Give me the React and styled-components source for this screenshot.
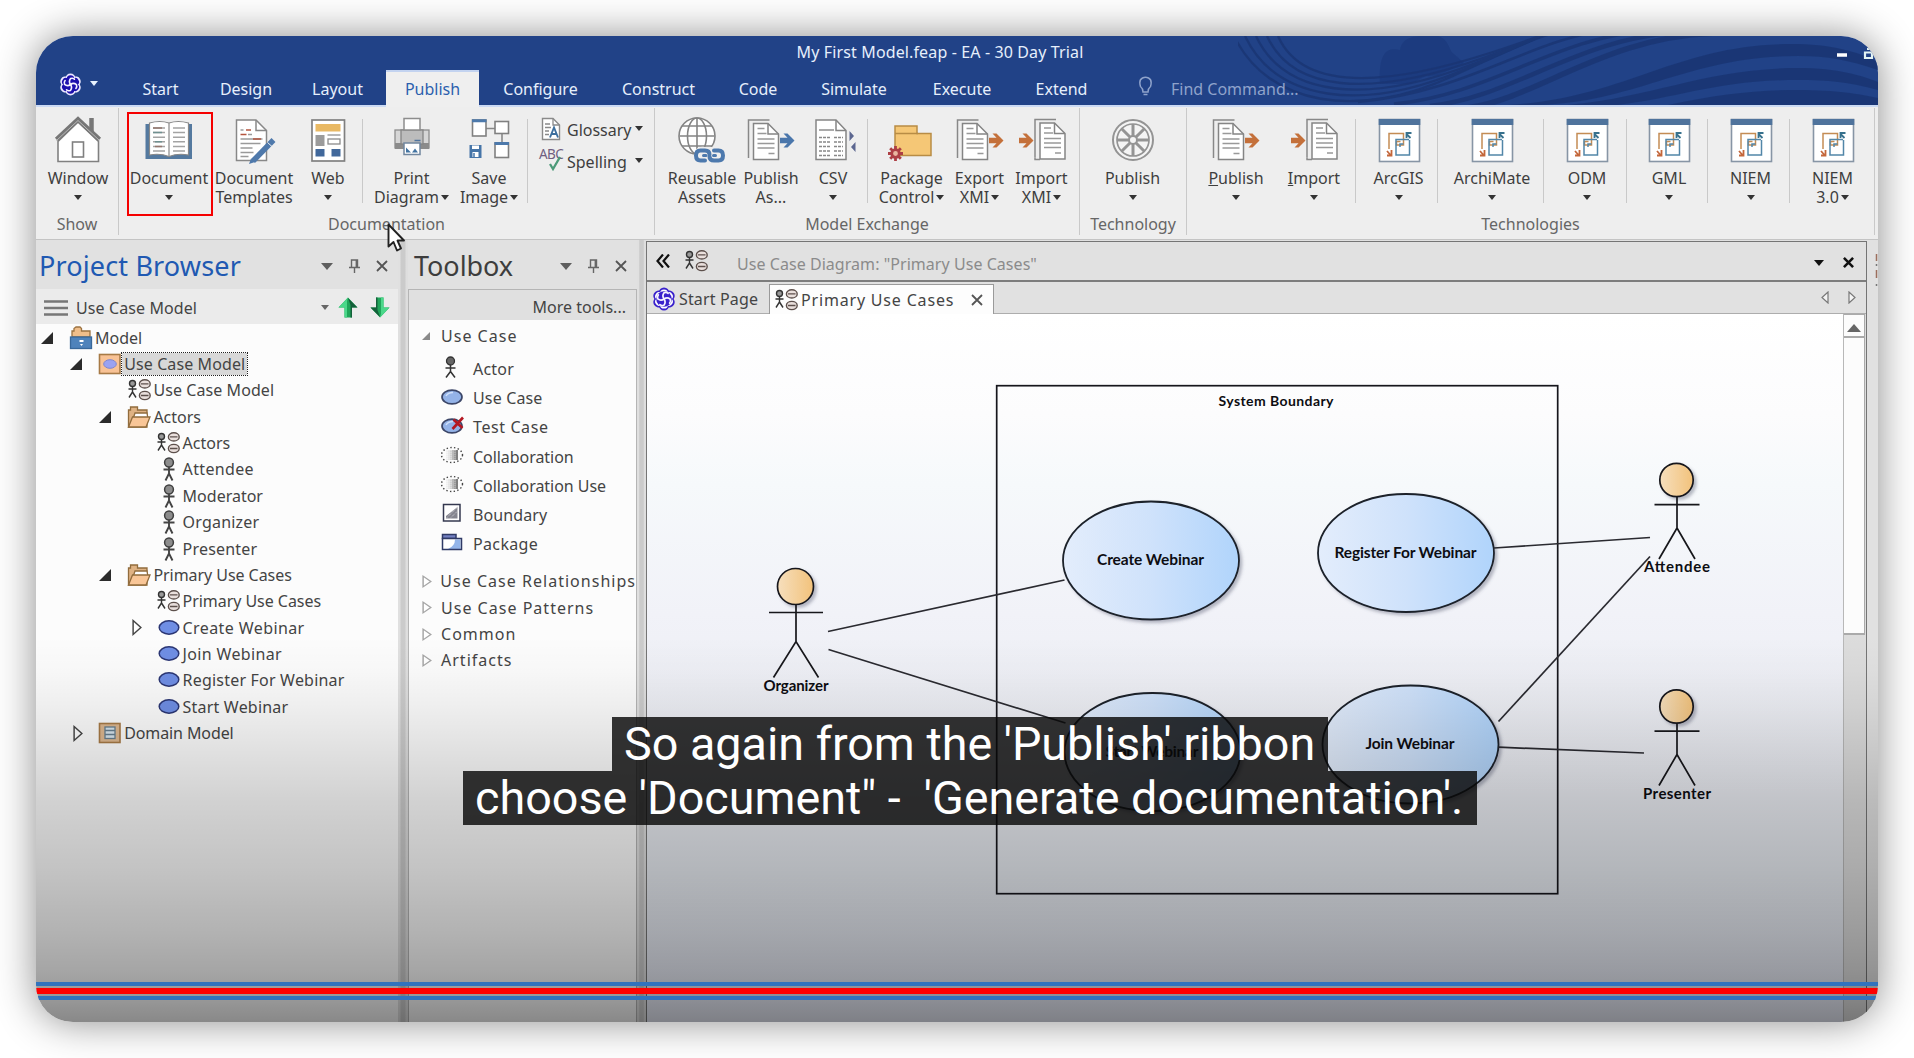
import React from 'react';
import styled, { createGlobalStyle, css } from 'styled-components';

const GlobalStyle = createGlobalStyle`
  * { box-sizing: border-box; }
  body { margin: 0; background: #fff; overflow: hidden; }
  svg { display: block; flex: none; }
`;

const ui = `"Noto Sans", "Open Sans", sans-serif`;

/* ---------- shell ---------- */

const Page = styled.main`
  width: 1914px;
  height: 1058px;
  padding: 36px;
  background: #fff;
  font-family: ${ui};
  font-size: 16px;
  color: #444;
`;

const Frame = styled.div`
  position: relative;
  display: flex;
  flex-direction: column;
  width: 1842px;
  height: 986px;
  border-radius: 37px;
  overflow: hidden;
  background: #e1e1e1;
`;

const Shadow = styled.div`
  border-radius: 37px;
  box-shadow: 0 0 40px rgba(0, 0, 0, 0.46);
`;

const Header = styled.header`
  position: relative;
  flex: none;
  height: 71px;
  background: #214287;
  border-bottom: 2px solid #cbdaf4;
  color: #e6effc;
`;

const Waves = styled.svg`
  position: absolute;
  top: 0;
  right: 0;
`;

const TitleRow = styled.div`
  position: relative;
  display: flex;
  height: 34px;
`;

const Title = styled.div`
  flex: 1;
  padding-left: 7px;
  text-align: center;
  line-height: 33px;
  letter-spacing: 0.13px;
`;

const Controls = styled.div`
  display: flex;
  gap: 16px;
  width: 41px;
  padding-top: 12px;
`;

const TabRow = styled.nav`
  position: relative;
  display: flex;
  height: 37px;
`;

const AppMenu = styled.div`
  display: flex;
  gap: 8px;
  width: 82px;
  padding: 3px 0 0 23px;
  color: #fff;
`;

const MenuTab = styled.div`
  width: ${(p) => p.$w}px;
  padding-top: 1px;
  line-height: 36px;
  text-align: center;
  ${(p) => p.$active && css`
    background: #efefef;
    box-shadow: inset 0 2px 0 #c3d3f0;
    color: #2c5fae;
  `}
`;

const Find = styled.div`
  display: flex;
  gap: 18px;
  padding-left: 32px;
  line-height: 38px;
  color: #8fa3cb;
`;

/* ---------- ribbon ---------- */

const Ribbon = styled.section`
  display: flex;
  flex: none;
  height: 133px;
  padding-top: 1px;
  background: #eeeeee;
  border-bottom: 1px solid #c4c4c4;
`;

const Group = styled.div`
  display: flex;
  flex-direction: column;
  width: ${(p) => p.$w}px;
  height: 127px;
  border-right: 1px solid #c9c9c9;
`;

const Items = styled.div`
  display: flex;
  height: 103px;
  padding-left: ${(p) => p.$pad || 0}px;
`;

const GroupLabel = styled.div`
  height: 24px;
  line-height: 26px;
  text-align: center;
  color: #666;
`;

const Sep = styled.i`
  flex: none;
  width: 1px;
  height: 84px;
  margin: 11px ${(p) => p.$r || 0}px 0 ${(p) => p.$l || 0}px;
  background: #c9c9c9;
`;

const RibbonButton = styled.div`
  display: flex;
  flex-direction: column;
  align-items: center;
  flex: none;
  width: ${(p) => p.$w}px;
  height: 103px;
  padding-top: 7px;
  color: #3e3e3e;
`;

const ButtonText = styled.span`
  display: flex;
  align-items: center;
  gap: ${(p) => (p.$first ? 0 : 2)}px;
  height: 19px;
  margin-top: ${(p) => (p.$first ? 4 : 0)}px;
  line-height: 19px;
  white-space: pre;
`;

const Caret = styled.i`
  width: 0;
  height: 0;
  border: ${(p) => p.$s || 4}px solid transparent;
  border-top: ${(p) => (p.$s || 4) + 1}px solid ${(p) => p.$c || '#333'};
  border-bottom: 0;
`;

const MenuCaret = styled(Caret)`
  margin-top: 8px;
`;

const Marker = styled.div`
  position: absolute;
  left: 91px;
  top: 76px;
  width: 86px;
  height: 104px;
  border: 2px solid #f50000;
`;

const Stack = styled.div`
  display: flex;
  flex-direction: column;
  gap: 7px;
  padding-top: 8px;
`;

const StackRow = styled.div`
  display: flex;
  align-items: center;
  height: 25px;
  width: 107px;
  color: #3e3e3e;
`;

const StackText = styled.span`
  width: 68px;
  margin-left: 4px;
  padding-top: 2px;
`;

/* ---------- body ---------- */

const Body = styled.div`
  display: flex;
  flex: 1;
  min-height: 0;
`;

const Splitter = styled.div`
  flex: none;
  width: ${(p) => p.$w}px;
  background: linear-gradient(90deg, #e0e0e0 0 20%, #cbcbcb 30% 70%, #dedede 80%);
`;

const Browser = styled.section`
  display: flex;
  flex-direction: column;
  width: 362px;
`;

const PanelHead = styled.div`
  display: flex;
  align-items: center;
  flex: none;
  height: 49px;
  padding: 3px ${(p) => p.$r}px 0 ${(p) => p.$l}px;
  background: #e1e1e1;
`;

const PanelTitle = styled.h2`
  flex: 1;
  margin: 0;
  font-size: ${(p) => p.$size}px;
  font-weight: 400;
  letter-spacing: ${(p) => p.$ls || 0}px;
  line-height: 40px;
  color: ${(p) => p.$c};
`;

const HeadIconsRow = styled.span`
  display: flex;
  align-items: center;
  gap: 16px;
`;

const ModelPicker = styled.div`
  display: flex;
  align-items: center;
  flex: none;
  height: 35px;
  padding: 2px 8px 0 8px;
  background: #ebebeb;
`;

const PickerText = styled.span`
  flex: 1;
  padding: 1px 0 0 8px;
  letter-spacing: 0.1px;
`;

const PickerArrows = styled.span`
  display: flex;
  gap: 12px;
  margin-left: 9px;
`;

const Tree = styled.div`
  flex: 1;
  padding-top: 0.5px;
  background: #fcfcfc;
`;

const TreeRow = styled.div`
  display: flex;
  align-items: center;
  height: 26.37px;
  padding-left: ${(p) => 4 + p.$level * 29.2}px;
  white-space: pre;
`;

const TreeArrow = styled.span`
  display: flex;
  width: 29px;
  padding-left: ${(p) => (p.$closed ? 4 : 1)}px;
`;

const TreeIcon = styled.span`
  display: flex;
  justify-content: center;
  width: 24px;
`;

const TreeLabel = styled.span`
  padding: 0 2px;
  line-height: 22px;
  letter-spacing: ${(p) => p.$ls}px;
  ${(p) => p.$selected && css`
    background: #d8d8d8;
    outline: 1px dotted #222;
  `}
`;

const Toolbox = styled.section`
  display: flex;
  flex-direction: column;
  width: 229px;
`;

const ToolBody = styled.div`
  flex: 1;
  width: 229px;
  border: 1px solid #b5b5b5;
  border-width: 1px 1px 0 1px;
  background: #fcfcfc;
  overflow: hidden;
`;

const MoreTools = styled.div`
  height: 30px;
  padding-right: 10px;
  background: #e0e0e0;
  text-align: right;
  line-height: 35px;
`;

const Category = styled.div`
  display: flex;
  align-items: center;
  height: ${(p) => p.$h || 26.4}px;
  padding-left: 13px;
  letter-spacing: 1.02px;
  white-space: nowrap;
`;

const CategoryArrow = styled.span`
  display: flex;
  width: 19px;
`;

const ToolItem = styled.div`
  display: flex;
  align-items: center;
  height: 29.3px;
  padding-left: 32px;
  letter-spacing: ${(p) => p.$ls || 0}px;
`;

const ToolIcon = styled.span`
  display: flex;
  justify-content: center;
  width: 22px;
  margin: -4px 10px 0 0;
`;

const ToolList = styled.div`
  padding: 3px 0 9px;
`;

const Workspace = styled.section`
  display: flex;
  flex-direction: column;
  width: 1221px;
  margin-top: 1px;
  border: 1.5px solid #757575;
  border-bottom: 0;
`;

const DocHead = styled.div`
  display: flex;
  align-items: center;
  flex: none;
  height: 40px;
  padding: 0 12px 0 9px;
  border-bottom: 2px solid #7d7d7d;
  background: #e1e1e1;
`;

const DocIcon = styled.span`
  margin-left: 15px;
`;

const DocTitle = styled.span`
  flex: 1;
  padding: 6px 0 0 29px;
  letter-spacing: 0.05px;
  color: #8b8b8b;
`;

const HeadTools = styled.span`
  display: flex;
  align-items: center;
  gap: 19px;
  padding-top: 3px;
`;

const DocTabs = styled.div`
  display: flex;
  align-items: flex-end;
  flex: none;
  height: 32px;
  background: #e1e1e1;
  box-shadow: inset 0 -1px 0 #adadad;
`;

const DocTab = styled.div`
  display: flex;
  align-items: center;
  gap: 3px;
  width: ${(p) => p.$w}px;
  height: 30px;
  padding-left: 5px;
  white-space: nowrap;
  letter-spacing: 0.15px;
  ${(p) => p.$active && css`
    border: 1px solid #9a9a9a;
    border-bottom: 0;
    padding-top: 1px;
    background: #fdfdfd;
    letter-spacing: 0.82px;
  `}
`;

const TabClose = styled.span`
  margin-left: 14px;
`;

const TabNav = styled.div`
  display: flex;
  gap: 19px;
  margin-left: auto;
  padding: 0 10px 10px 0;
`;

const CanvasRow = styled.div`
  display: flex;
  flex: 1;
  min-height: 0;
`;

const Canvas = styled.div`
  flex: 1;
  overflow: hidden;
  background: linear-gradient(#fff 0, #fcfcfd 100px, #f6f9fb 170px, #f1f2f8 300px, #e9ebf1 480px, #e7ebf1 560px, #e9ecf8 708px);
`;

const Scrollbar = styled.div`
  display: flex;
  flex-direction: column;
  width: 23px;
  padding-right: 1px;
  background: #dcdcdc;
  border-left: 1px solid #b8b8b8;
`;

const ScrollButton = styled.div`
  display: flex;
  justify-content: center;
  height: 24px;
  padding-top: 9px;
  background: #fcfcfc;
  border: 1px solid #aaa;
  border-width: 1px 1px 2px 0;
`;

const ScrollThumb = styled.div`
  height: 297px;
  background: #fcfcfc;
  border: 1px solid #aaa;
  border-width: 0 1px 2px 0;
`;

const DockEdge = styled.div`
  flex: 1;
  padding: 14px 0 0 8px;
`;

/* ---------- player overlay ---------- */

const Shade = styled.div`
  position: absolute;
  inset: 600px 0 0 0;
  background: linear-gradient(
    rgba(0, 0, 0, 0) 0,
    rgba(0, 0, 0, 0.018) 35px,
    rgba(0, 0, 0, 0.055) 70px,
    rgba(0, 0, 0, 0.12) 125px,
    rgba(0, 0, 0, 0.17) 164px,
    rgba(0, 0, 0, 0.225) 231px,
    rgba(0, 0, 0, 0.295) 297px,
    rgba(0, 0, 0, 0.345) 335px,
    rgba(0, 0, 0, 0.4) 364px,
    rgba(0, 0, 0, 0.46) 386px
  );
`;

const Captions = styled.div`
  position: absolute;
  left: 427px;
  top: 681px;
  width: 1014px;
  display: flex;
  flex-direction: column;
  align-items: center;
  font-family: Roboto, sans-serif;
  font-size: 46.7px;
  color: #fff;
`;

const CaptionLine = styled.div`
  width: ${(p) => p.$w}px;
  height: 54px;
  padding-left: 12px;
  background: rgba(8, 8, 8, 0.82);
  line-height: 55px;
  white-space: pre;
`;

const Progress = styled.div`
  position: absolute;
  left: 0;
  right: 0;
  top: 946px;
  height: 18px;
  padding: 2px 0;
  border: 4px solid #3273bd;
  border-width: 4px 0;
`;

const Played = styled.div`
  height: 6px;
  background: #ff0000;
`;

const Pointer = styled.svg`
  position: absolute;
  left: 351px;
  top: 187px;
`;

/* ---------- ribbon icons (50 x 50 grid) ---------- */

const Ico = ({ children }) => (
  <svg width="50" height="50" viewBox="0 0 50 50" fill="none">{children}</svg>
);

const HouseIcon = () => (
  <Ico>
    <path d="M38.500 3v16" stroke="#777" strokeWidth="4.500" />
    <path d="M5 26.500V46.500H45.500V26.500L25 7Z" fill="#fff" stroke="#808080" strokeWidth="1.600" />
    <path d="M3.500 24.500 25 4.500 46.500 24.500" stroke="#777" strokeWidth="4.600" />
    <path d="M3.500 25.500 25 5.500 46.500 25.500" stroke="#b9b9b9" strokeWidth="1" />
    <rect x="19.500" y="27" width="11" height="15" fill="#fff" stroke="#808080" strokeWidth="1.600" />
  </Ico>
);

const BookIcon = () => (
  <Ico>
    <path d="M1.500 9H48v35H1.500Z" fill="#54799f" />
    <path d="M5.500 8Q16 5 25 8Q34 5 44.500 8V40Q34 38 25 41.500Q16 38 5.500 40Z" fill="#fff" stroke="#888" strokeWidth="1.200" />
    <path d="M25 8v33" stroke="#999" strokeWidth="1.400" />
    <path d="M9 13h12M9 17.600h12M9 22.200h12M9 26.800h12M9 31.400h12M9 36h12M29 13h12M29 17.600h12M29 22.200h12M29 26.800h12M29 31.400h12M29 36h12" stroke="#a3a3a3" strokeWidth="1.500" />
    <path d="M9 13h9M11 31.400h7" stroke="#94776e" strokeWidth="1.500" />
    <path d="M9 17.600h9M11 26.800h7" stroke="#6f9090" strokeWidth="1.500" />
  </Ico>
);

const TemplateIcon = () => (
  <Ico>
    <path d="M7.500 5H27L37.500 15.500V45.500H7.500Z" fill="#fff" stroke="#888" strokeWidth="1.500" />
    <path d="M27 5V15.500H37.500" stroke="#888" strokeWidth="1.500" />
    <path d="M11.500 15h3M19 19.500h4M11.500 24h22M11.500 28.500h20M11.500 33h12M11.500 37.500h13M11.500 41.500h8" stroke="#9a9a9a" strokeWidth="1.400" />
    <path d="M17 15h5M11.500 19.500h6M24 24h8" stroke="#b5553f" strokeWidth="1.600" />
    <path d="M44.500 25 24 46" stroke="#4f79ab" strokeWidth="5.500" />
    <path d="M38.500 27.500l4.500 4" stroke="#eee" strokeWidth="1" />
    <path d="M22 43.500 20 49l6-2Z" fill="#4f79ab" />
  </Ico>
);

const WebIcon = () => (
  <Ico>
    <rect x="9" y="5" width="32.500" height="41" fill="#fff" stroke="#808080" strokeWidth="1.700" />
    <path d="M12.500 9h25v7.500h-25Z" fill="#e9b964" />
    <path d="M12.500 20h9v11h-9Z" fill="#9b9b9b" />
    <path d="M24.500 20h13" stroke="#a0a0a0" strokeWidth="1.500" />
    <rect x="25" y="24" width="12" height="5" stroke="#8b8b8b" strokeWidth="1.300" />
    <path d="M12.500 34h9v7.500h-9ZM28.500 34h9v7.500h-9Z" fill="#41689b" />
  </Ico>
);

const PrinterIcon = () => (
  <Ico>
    <rect x="8" y="15" width="34" height="18" fill="#d6d6d6" stroke="#8d8d8d" strokeWidth="1.300" />
    <path d="M8 28h34v6H8Z" fill="#8b8b8b" />
    <rect x="14" y="15" width="22" height="14" fill="#bcbcbc" stroke="#858585" strokeWidth="1.300" />
    <rect x="17" y="3.500" width="16" height="11.500" fill="#fff" stroke="#8d8d8d" strokeWidth="1.500" />
    <path d="M27.500 25.500h6" stroke="#50759f" strokeWidth="1.500" />
    <rect x="17" y="28" width="16" height="11.500" fill="#fff" stroke="#71879f" strokeWidth="1.500" />
    <path d="M19 37.500v-5l5 5ZM25 37.500l3-4 3 4Z" fill="#4274a2" />
  </Ico>
);

const SaveImageIcon = () => (
  <Ico>
    <path d="M22 13.500h10M38 19v8" stroke="#888" strokeWidth="1.600" />
    <rect x="8.500" y="5" width="13.500" height="16" fill="#fff" stroke="#808080" strokeWidth="1.600" />
    <rect x="31" y="6.500" width="13.500" height="12" fill="#fff" stroke="#808080" strokeWidth="1.600" />
    <rect x="31" y="28" width="13.500" height="14.500" fill="#fff" stroke="#808080" strokeWidth="1.600" />
    <path d="M8 5.800h14.500M30.500 28.500h14.500" stroke="#4d79ab" strokeWidth="3" />
    <path d="M5.500 30h12v13h-12Z" fill="#4675a8" />
    <path d="M8 30.500h7v3.500H8ZM8.500 37h6v5h-6Z" fill="#fff" />
    <path d="M10 38v4" stroke="#4675a8" strokeWidth="1.500" />
  </Ico>
);

const GlobeIcon = () => (
  <Ico>
    <g stroke="#848484" strokeWidth="1.600">
      <circle cx="20" cy="21" r="18" fill="#fff" />
      <ellipse cx="20" cy="21" rx="9.500" ry="18" />
      <path d="M20 3v36M2.500 21h35M5 11h30M5 31h30" />
    </g>
    <path d="M18 46V36Q21 31 28 32H48V47Z" fill="#eee" />
    <g stroke="#4d79ad" strokeWidth="4" strokeLinecap="round">
      <path d="M28 45.500H23.500Q19 45.500 19 40.500T23.500 35.500H28Q32.500 35.500 32.500 39.500" />
      <path d="M37 35.500H41.500Q46 35.500 46 40.500T41.500 45.500H37Q32.500 45.500 32.500 41.500" />
      <path d="M26.500 40.500H29M36.500 40.500H38.500" strokeWidth="3" />
    </g>
  </Ico>
);

const ArrowShape = ({ x, y, color }) => (
  <path transform={`translate(${x} ${y})`} d="M0-2.700h7.500L3.500-7H7.500L14.500 0 7.500 7H3.500L7.500 2.700H0Z" fill={color} />
);

const Sheets = ({ x, y = 0 }) => (
  <g transform={`translate(${x} ${y})`} strokeWidth="1.500">
    <path d="M0 43V5H21" stroke="#888" />
    <path d="M5 8.500H19.500L30 19V44.500H5Z" fill="#fff" stroke="#858585" />
    <path d="M19.500 8.500V19H30" stroke="#858585" />
    <path d="M9 13.500h7M9 18.500h9" stroke="#999" />
    <path d="M9 24h17M9 28.500h17M9 33h17M20 38.500h6" stroke="#999" />
  </g>
);

const SheetsOut = ({ color }) => (
  <Ico>
    <Sheets x={2.5} />
    <ArrowShape x={34} y={25.500} color={color} />
  </Ico>
);

const SheetsIn = () => (
  <Ico>
    <Sheets x={18} y={-0.5} />
    <path d="M18 42.500V44.500H23" stroke="#888" strokeWidth="1.500" />
    <ArrowShape x={2} y={25.500} color="#c4703a" />
  </Ico>
);

const CsvIcon = () => (
  <Ico>
    <path d="M8 5H28L38 15.500V44.500H8Z" fill="#fff" stroke="#858585" strokeWidth="1.500" />
    <path d="M28 5V15.500H38" stroke="#858585" strokeWidth="1.500" />
    <path d="M11 15h15" stroke="#aaa" strokeWidth="2" />
    <path d="M11 22.500h11M26 22.500h9M11 27h11M26 27h9M11 31.500h11M26 31.500h9M11 36h11M26 36h9M11 40.500h11M26 40.500h9" stroke="#888" strokeWidth="1.700" strokeDasharray="3 1" />
    <path d="M41.500 16v10l4.500-5ZM47.500 27v10l-4.500-5Z" fill="#5c6790" />
  </Ico>
);

const gearTeeth = [0, 45, 90, 135];

const PackageIcon = () => (
  <Ico>
    <path d="M8 11H30V18.500H44V40.500H8Z" fill="#f5c776" stroke="#b88c45" strokeWidth="1.500" />
    <path d="M8 18.500H31" stroke="#b88c45" strokeWidth="1.500" />
    <g transform="translate(8.500 38.500)" stroke="#ad3f44" strokeWidth="2.800">
      {gearTeeth.map((a) => <path key={a} d="M-7.500 0H7.500" transform={`rotate(${a})`} />)}
      <circle r="3.800" fill="#e9b7a0" />
    </g>
  </Ico>
);

const WheelIcon = () => (
  <Ico>
    <g stroke="#949494">
      <circle cx="25" cy="25" r="20" strokeWidth="2" fill="#f4f4f4" />
      <circle cx="25" cy="25" r="16" strokeWidth="1.700" />
      {[0, 45, 90, 135].map((a) => (
        <path key={a} d="M9 25H41" strokeWidth="3" transform={`rotate(${a} 25 25)`} />
      ))}
      <circle cx="25" cy="25" r="4" fill="#f4f4f4" strokeWidth="2" />
    </g>
  </Ico>
);

const TechIcon = () => (
  <Ico>
    <rect x="5.500" y="4.500" width="40" height="42" fill="#fff" stroke="#8795a5" strokeWidth="1.600" />
    <path d="M4.700 4h41.600v6H4.700Z" fill="#4f739c" />
    <path d="M15 34V18.500H29.500V30H22.500V26.500H26.500" stroke="#c48c54" strokeWidth="1.500" />
    <path d="M35.500 25V40H22V24.500H35M29.500 29H26v3" stroke="#5286a8" strokeWidth="1.500" />
    <path d="M13 36l3.500 4M17.500 35v5.500H13" stroke="#c4673b" strokeWidth="1.800" />
    <path d="M36.500 23l-4-4M32.500 23V18H37.500" stroke="#37718d" strokeWidth="1.800" />
  </Ico>
);

const GlossaryIcon = () => (
  <svg width="24" height="24" viewBox="0 0 24 24" fill="none">
    <path d="M3.500 1.500H14L20.500 8V22.500H3.500Z" fill="#fff" stroke="#8a8a8a" strokeWidth="1.400" />
    <path d="M14 1.500V8H20.500M6 7h5M6 10.500h6M6 14h4M6 17.500h4" stroke="#8a8a8a" strokeWidth="1.300" />
    <path d="M11 20.500 15 10.500 19 20.500M12.500 17h5" stroke="#3d6f9e" strokeWidth="1.900" />
  </svg>
);

const SpellBadge = styled.span`
  position: relative;
  width: 24px;
  height: 25px;
  font-size: 13.5px;
  line-height: 13px;
  letter-spacing: -0.6px;
  color: #705e80;
  svg { position: absolute; left: 10px; top: 8px; }
`;

/* ---------- small icons ---------- */

const bumps = [0, 60, 120, 180, 240, 300];

const Rosette = ({ size, light }) => (
  <svg width={size} height={size} viewBox="0 0 24 24" fill="none">
    <g fill={light ? '#ece8ff' : '#3a22cc'}>
      {bumps.map((a) => <circle key={a} cx="12" cy="5.800" r="5.300" transform={`rotate(${a} 12 12)`} />)}
    </g>
    <g fill={light ? '#1d10ad' : '#fff'}>
      {bumps.map((a) => <circle key={a} cx="12" cy="6.300" r="3.900" transform={`rotate(${a} 12 12)`} />)}
      <circle cx="12" cy="12" r="7" />
    </g>
    <circle cx="12" cy="12" r="7.800" fill={light ? '#1d10ad' : '#3a22cc'} />
    <g stroke="#f6f3ff" strokeWidth="1.700" strokeLinecap="round">
      {[0, 90, 180, 270].map((a) => (
        <path key={a} d="M12 12Q9 9.500 10.500 6Q12.500 4.500 14.500 5.500" transform={`rotate(${a + 15} 12 12)`} />
      ))}
    </g>
  </svg>
);

const DiagramIcon = () => (
  <svg width="23" height="22" viewBox="0 0 23 22" fill="none">
    <g stroke="#333" strokeWidth="1.400">
      <circle cx="4.500" cy="4.500" r="3" fill="#999" />
      <path d="M4.500 7.500V13M0.500 10H8.500M4.500 13 1 18.500M4.500 13 8 18.500" />
    </g>
    <g stroke="#5d504c" strokeWidth="1.400" fill="#e9dfdc">
      <ellipse cx="16.800" cy="4.900" rx="5.400" ry="4.100" />
      <ellipse cx="16.800" cy="16.500" rx="5.400" ry="4.100" />
      <path d="M13 4.900h7.500M13 16.500h7.500" />
    </g>
  </svg>
);

const PersonIcon = () => (
  <svg width="14" height="24" viewBox="0 0 14 24" fill="none">
    <circle cx="7" cy="5.500" r="4.400" fill="#8c8c8c" stroke="#3f3f3f" strokeWidth="1.500" />
    <path d="M7 10V17M1.500 12.500H12.500M7 16.500 3.500 23.500M7 16.500 10.500 23.500" stroke="#444" strokeWidth="1.900" />
  </svg>
);

const OvalIcon = () => (
  <svg width="22" height="16" viewBox="0 0 22 16">
    <ellipse cx="11" cy="7.500" rx="9.800" ry="6.700" fill="#6f8ee4" stroke="#2b3674" strokeWidth="1.500" />
  </svg>
);

const FolderIcon = () => (
  <svg width="24" height="24" viewBox="0 0 24 24" fill="#dfb283" stroke="#916c3d" strokeWidth="1.300">
    <path d="M1.500 22V5H3.500V2H10.500V5H20V22Z" />
    <path d="M8 8H20L21 14H6Z" fill="#fff" />
    <path d="M5.500 12H23L19 22H1.500Z" fill="#f9c697" />
  </svg>
);

const ModelIcon = () => (
  <svg width="24" height="24" viewBox="0 0 24 24">
    <path d="M3 11V5H5V2.500L7 1H11L12.500 2.500V5H21V11Z" fill="#f0be8a" stroke="#9c7341" strokeWidth="1.300" />
    <rect x="1.500" y="11" width="21" height="11.500" fill="#4f83bb" stroke="#39689a" strokeWidth="1.300" />
    <path d="M10.500 14h4v2h-4ZM11 18h3l-1.500 2Z" fill="#fff" />
  </svg>
);

const PackageModelIcon = () => (
  <svg width="24" height="22" viewBox="0 0 24 22">
    <rect x="1.500" y="1.500" width="20.500" height="19" fill="#f8c295" stroke="#a77a46" strokeWidth="1.600" />
    <ellipse cx="12" cy="11" rx="6.300" ry="4.300" fill="#9aa2f2" stroke="#7f86ce" />
  </svg>
);

const DomainIcon = () => (
  <svg width="24" height="22" viewBox="0 0 24 22">
    <rect x="1.500" y="1.500" width="20.500" height="19" fill="#dcb78f" stroke="#a77a46" strokeWidth="1.600" />
    <rect x="7" y="5" width="10" height="11.500" fill="#d6e4ec" stroke="#667e8e" strokeWidth="1.300" />
    <path d="M7 8.500h10M7 12.500h10" stroke="#667e8e" strokeWidth="1.300" />
  </svg>
);

const OpenArrow = ({ s = 12, c = '#2b2b2b' }) => (
  <svg width={s} height={s} viewBox="0 0 12 12"><path d="M12 0V12H0Z" fill={c} /></svg>
);

const ClosedArrow = ({ c = '#444', w = 10, h = 17 }) => (
  <svg width={w} height={h} viewBox="0 0 9 16" preserveAspectRatio="none">
    <path d="M1 1.500 8 8 1 14.500Z" fill="#fff" stroke={c} strokeWidth="1.300" />
  </svg>
);

const BurgerIcon = () => (
  <svg width="24" height="16" viewBox="0 0 24 16"><path d="M0 1.500H24M0 8H24M0 14.500H24" stroke="#777" strokeWidth="2.500" /></svg>
);

const GreenArrow = ({ down }) => (
  <svg width="20" height="21" viewBox="0 0 20 21" transform={down ? 'rotate(180)' : undefined}>
    <path d="M10 0.500 19.500 10.500H14V20.500H6.500V10.500H0.500Z" fill="#20a65a" />
    <path d="M10 0.500 0.500 10.500H6.500V20.500H9V4Z" fill="#4bd88a" />
    <path d="M10 1 19.500 10.500H14V20.500H12.500V8Z" fill="#14603a" />
  </svg>
);

const CrossIcon = ({ s = 12, c = '#555', w = 1.8 }) => (
  <svg width={s} height={s} viewBox="0 0 12 12"><path d="M1 1 11 11M11 1 1 11" stroke={c} strokeWidth={w} /></svg>
);

const HeadIcons = () => (
  <HeadIconsRow>
    <Caret $s={6.5} $c="#5e5e5e" />
    <svg width="11" height="14" viewBox="0 0 11 14" fill="none">
      <path d="M2.500 1H8.500V8.500H2.500ZM0 8.500H11M5.500 8.500V14" stroke="#666" strokeWidth="1.400" />
      <path d="M7.500 1V8.500" stroke="#666" strokeWidth="1.800" />
    </svg>
    <CrossIcon />
  </HeadIconsRow>
);

const ToolActorIcon = () => (
  <svg width="14" height="24" viewBox="0 0 14 24" fill="none">
    <circle cx="5.500" cy="6" r="4" fill="#666" stroke="#333" strokeWidth="1.300" />
    <path d="M5.500 10V17M0.500 13H10.500M5.500 16.500 1 22.500M5.500 16.500 10 22.500" stroke="#333" strokeWidth="1.500" />
  </svg>
);

const ToolOvalIcon = ({ cross }) => (
  <svg width="24" height="18" viewBox="0 0 24 18" fill="none">
    <ellipse cx="12" cy="10" rx="10" ry="6.900" fill="#94b3e8" stroke="#3c4668" strokeWidth="1.700" />
    <path d="M6 9Q8 5.500 13 5.500" stroke="#cfe0fa" strokeWidth="1.500" />
    {cross && <path d="M13.500 3.500 22.500 12M23 1.500 12.500 13" stroke="#b41822" strokeWidth="2.600" />}
  </svg>
);

const dots = [];
for (let y = 0; y < 5; y += 1) {
  for (let x = 0; x < 6; x += 1) {
    dots.push([7 + x * 2, 5 + y * 2, 0.3 + x * 0.14]);
  }
}

const CollabIcon = () => (
  <svg width="24" height="18" viewBox="0 0 24 18" fill="none">
    <ellipse cx="12" cy="9" rx="10.500" ry="7.500" stroke="#444" strokeWidth="1.400" strokeDasharray="1.400 2.300" />
    {dots.map(([x, y, r]) => <circle key={`${x}-${y}`} cx={x} cy={y} r={r} fill="#555" />)}
  </svg>
);

const BoundaryIcon = () => (
  <svg width="20" height="20" viewBox="0 0 20 20">
    <rect x="1.500" y="1.500" width="16.500" height="16.500" fill="#fff" stroke="#34384f" strokeWidth="1.500" />
    <path d="M15.500 4V15.500H4V13Z" fill="#85858f" />
    <path d="M15.500 4 4 15.500M15.500 8 8 15.500" stroke="#d8d8dd" strokeWidth="1" strokeDasharray="1 1" />
  </svg>
);

const ToolPackageIcon = () => (
  <svg width="22" height="18" viewBox="0 0 22 18">
    <path d="M1.500 1.500H15V5.500H1.500Z" fill="#7380c2" stroke="#2f3a66" strokeWidth="1.500" />
    <path d="M1.500 5.500H20.500V16.500H1.500Z" fill="#fff" />
    <path d="M19.500 6.500V16H7Q14 13 14 6.500Z" fill="#94b5ea" />
    <path d="M1.500 5.500H20.500V16.500H1.500Z" fill="none" stroke="#2f3a66" strokeWidth="1.500" />
  </svg>
);

/* ---------- diagram ---------- */

const OX = 647;
const OY = 313.5;

const useCases = [
  { cx: 1151, cy: 560, label: 'Create Webinar', w: 107 },
  { cx: 1406, cy: 552.5, label: 'Register For Webinar', w: 142 },
  { cx: 1152.5, cy: 751.5, label: 'Start Webinar', w: 93 },
  { cx: 1410.5, cy: 744, label: 'Join Webinar', w: 89 },
];

const actors = [
  { x: 796, y: 586, arm: 27, leg: 22.5, r: 18, label: 'Organizer', w: 65, neck: 55, foot: 91, text: 104 },
  { x: 1677, y: 479.5, arm: 22.5, leg: 18, r: 16.7, label: 'Attendee', w: 66, neck: 48, foot: 79, text: 91.5 },
  { x: 1677, y: 706, arm: 22.5, leg: 18, r: 16.7, label: 'Presenter', w: 68, neck: 48, foot: 79, text: 92.5 },
];

const links = [
  [828, 631, 1064.5, 579.5],
  [828.5, 649, 1065.5, 722.5],
  [1494, 547.5, 1650, 537],
  [1498.5, 721, 1650, 556],
  [1498.5, 746.7, 1644, 752.5],
];

const NodeText = styled.text`
  font-family: Lato, "Noto Sans", sans-serif;
  font-size: ${(p) => p.$size || 15.5}px;
  font-weight: 700;
  fill: #0d0d12;
  text-anchor: middle;
`;

const Diagram = () => (
  <svg width="1196" height="708" viewBox={`${OX} ${OY} 1196 708`} fill="none">
    <defs>
      <linearGradient id="ellipseFill">
        <stop offset="0" stopColor="#e3edfc" />
        <stop offset="0.5" stopColor="#cfe2fb" />
        <stop offset="1" stopColor="#b0d4fb" />
      </linearGradient>
      <linearGradient id="headFill">
        <stop offset="0" stopColor="#f6dfbd" />
        <stop offset="1" stopColor="#f2c27b" />
      </linearGradient>
      <filter id="drop" x="-10%" y="-10%" width="125%" height="125%">
        <feDropShadow dx="2.500" dy="2.500" stdDeviation="1.500" floodColor="#555a70" floodOpacity="0.4" />
      </filter>
    </defs>
    <rect x="996.700" y="385.200" width="561" height="508" stroke="#16161c" strokeWidth="1.700" />
    <NodeText x="1276" y="405" $size={14} textLength="115">System Boundary</NodeText>
    {useCases.map((u) => (
      <g key={u.label}>
        <ellipse cx={u.cx} cy={u.cy} rx="88" ry="59" fill="url(#ellipseFill)" stroke="#1b2029" strokeWidth="1.800" filter="url(#drop)" />
        <NodeText x={u.cx - 0.5} y={u.cy + 4.500} textLength={u.w}>{u.label}</NodeText>
      </g>
    ))}
    {actors.map((a) => (
      <g key={a.label} stroke="#17171b" strokeWidth="1.700">
        <circle cx={a.x - 0.5} cy={a.y} r={a.r} fill="url(#headFill)" filter="url(#drop)" />
        <path d={`M${a.x} ${a.y + a.r}V${a.y + a.neck}M${a.x - a.arm} ${a.y + a.r + 8}H${a.x + a.arm}M${a.x - a.leg} ${a.y + a.foot}L${a.x} ${a.y + a.neck}L${a.x + a.leg} ${a.y + a.foot}`} />
        <NodeText stroke="none" x={a.x} y={a.y + a.text} $size={15} textLength={a.w}>{a.label}</NodeText>
      </g>
    ))}
    {links.map(([x1, y1, x2, y2]) => (
      <line key={`${x1}-${y1}`} x1={x1} y1={y1} x2={x2} y2={y2} stroke="#2a2a30" strokeWidth="1.700" />
    ))}
  </svg>
);

const bands = [
  'M270 69C390 62 440 6 560 8C600 9 625 18 640 26V34C610 24 590 20 560 20C450 20 400 66 300 69Z',
  'M330 69C420 60 470 32 560 32C600 32 625 40 640 46V54C610 46 590 44 560 44C480 44 440 62 380 69Z',
  'M430 69C480 58 520 54 560 54C600 54 620 58 640 62V69Z',
];

const HeaderWaves = () => (
  <Waves width="640" height="69" viewBox="0 0 640 69" fill="none">
    <path d="M142 48C140 12 152 12 162 14C164 2 175 0 186 0H200C212 4 210 14 216 18L226 27C214 32 200 42 188 40L172 48Z" fill="#1b3a7c" opacity="0.75" />
    <g stroke="#1a3674" strokeWidth="2.300" opacity="0.85">
      {[0, 1, 2, 3, 4].map((i) => (
        <path key={i} d={`M${-4 + i * 11} 0C${30 + i * 8} ${70 - i * 5} ${120 + i * 3} ${84 - i * 7} ${215 + i * 10} ${40 - i * 6}S${310 - i * 6} ${-2 - i} ${330 - i * 8} -6`} />
      ))}
      {[0, 1, 2, 3].map((i) => (
        <path key={`m${i}`} strokeWidth={2.5 + i} d={`M${120 + i * 36} ${66 + i * 2}C${230 + i * 22} ${56 + i * 3} ${290 + i * 26} ${4 - i * 2} ${370 + i * 38} ${-6 + i}`} />
      ))}
    </g>
    <g fill="#1a3674" opacity="0.9">
      {bands.map((d) => <path key={d} d={d} />)}
    </g>
  </Waves>
);

/* ---------- data ---------- */

const menuTabs = [
  ['Start', 85], ['Design', 86], ['Layout', 97], ['Publish', 93], ['Configure', 123], ['Construct', 113],
  ['Code', 86], ['Simulate', 106], ['Execute', 110], ['Extend', 89],
];

const tree = [
  [0, 'open', <ModelIcon />, 'Model', 0],
  [1, 'open', <PackageModelIcon />, 'Use Case Model', 0.1, true],
  [2, '', <DiagramIcon />, 'Use Case Model', 0.08],
  [2, 'open', <FolderIcon />, 'Actors', 0],
  [3, '', <DiagramIcon />, 'Actors', 0],
  [3, '', <PersonIcon />, 'Attendee', 0.35],
  [3, '', <PersonIcon />, 'Moderator', 0],
  [3, '', <PersonIcon />, 'Organizer', 0.2],
  [3, '', <PersonIcon />, 'Presenter', 0.2],
  [2, 'open', <FolderIcon />, 'Primary Use Cases', -0.05],
  [3, '', <DiagramIcon />, 'Primary Use Cases', -0.05],
  [3, 'closed', <OvalIcon />, 'Create Webinar', 0.4],
  [3, '', <OvalIcon />, 'Join Webinar', 0.35],
  [3, '', <OvalIcon />, 'Register For Webinar', 0.2],
  [3, '', <OvalIcon />, 'Start Webinar', 0.2],
  [1, 'closed', <DomainIcon />, 'Domain Model', -0.1],
];

const tools = [
  ['Actor', <ToolActorIcon />, 0.2],
  ['Use Case', <ToolOvalIcon />, 0.15],
  ['Test Case', <ToolOvalIcon cross />, 0.6],
  ['Collaboration', <CollabIcon />, -0.05],
  ['Collaboration Use', <CollabIcon />, -0.05],
  ['Boundary', <BoundaryIcon />, 0.1],
  ['Package', <ToolPackageIcon />, 0.35],
];

const categories = ['Use Case Relationships', 'Use Case Patterns', 'Common', 'Artifacts'];

const technologies = [['ArcGIS', 77, 4], ['ArchiMate', 102, 3], ['ODM', 78, 4], ['GML', 76, 4], ['NIEM', 77, 4]];

const Button = ({ w, icon, label, second, caret }) => (
  <RibbonButton $w={w}>
    {icon}
    <ButtonText $first>{label}</ButtonText>
    <ButtonText>{second}{caret && <Caret />}</ButtonText>
  </RibbonButton>
);

export default function App() {
  return (
    <Page>
      <GlobalStyle />
      <Shadow>
        <Frame>
          <Header>
            <HeaderWaves />
            <TitleRow>
              <Title>My First Model.feap - EA - 30 Day Trial</Title>
              <Controls>
                <svg width="10" height="10" viewBox="0 0 10 10"><path d="M0 7H10" stroke="#fff" strokeWidth="3.500" /></svg>
                <svg width="12" height="12" viewBox="0 0 12 12" fill="none">
                  <path d="M2 4.500H9V10H2Z" stroke="#e4f4f4" strokeWidth="2.200" />
                  <path d="M4 1H12" stroke="#e4f4f4" strokeWidth="2" />
                </svg>
              </Controls>
            </TitleRow>
            <TabRow>
              <AppMenu>
                <Rosette size={23} light />
                <MenuCaret $c="#e8f2ff" />
              </AppMenu>
              {menuTabs.map(([name, w]) => (
                <MenuTab key={name} $w={w} $active={name === 'Publish'}>{name}</MenuTab>
              ))}
              <Find>
                <svg width="15" height="24" viewBox="0 0 15 24" fill="none" transform="translate(0 6)">
                  <path d="M5 16Q5 12.500 2.500 10.500Q0.500 4 4.500 2Q7.500 0.500 10.500 2Q14.500 4 12.500 10.500Q10 12.500 10 16ZM5.500 18.500H9.500" stroke="#8fa3cb" strokeWidth="1.500" />
                </svg>
                Find Command...
              </Find>
            </TabRow>
          </Header>

          <Ribbon>
            <Group $w={83}>
              <Items><Button w={84} icon={<HouseIcon />} label="Window" caret /></Items>
              <GroupLabel>Show</GroupLabel>
            </Group>
            <Group $w={536}>
              <Items $pad={8}>
                <Button w={84} icon={<BookIcon />} label="Document" caret />
                <Button w={86} icon={<TemplateIcon />} label="Document" second="Templates" />
                <Button w={62} icon={<WebIcon />} label="Web" caret />
                <Sep $l={3} $r={3} />
                <Button w={91} icon={<PrinterIcon />} label="Print" second="Diagram" caret />
                <Button w={64} icon={<SaveImageIcon />} label="Save" second="Image" caret />
                <Sep $l={6} $r={11} />
                <Stack>
                  <StackRow><GlossaryIcon /><StackText>Glossary</StackText><Caret /></StackRow>
                  <StackRow>
                    <SpellBadge>
                      ABC
                      <svg width="12" height="15" viewBox="0 0 12 15" fill="none"><path d="M1 8 4 13 11 1" stroke="#4c9a79" strokeWidth="2.300" /></svg>
                    </SpellBadge>
                    <StackText>Spelling</StackText><Caret />
                  </StackRow>
                </Stack>
              </Items>
              <GroupLabel>Documentation</GroupLabel>
            </Group>
            <Group $w={425}>
              <Items $pad={11}>
                <Button w={72} icon={<GlobeIcon />} label="Reusable" second="Assets" />
                <Button w={66} icon={<SheetsOut color="#4a76ab" />} label="Publish" second="As..." />
                <Button w={58} icon={<CsvIcon />} label="CSV" caret />
                <Sep $l={5} $r={7} />
                <Button w={73} icon={<PackageIcon />} label="Package" second="Control" caret />
                <Button w={63} icon={<SheetsOut color="#c4703a" />} label="Export" second="XMI" caret />
                <Button w={61} icon={<SheetsIn />} label="Import" second="XMI" caret />
              </Items>
              <GroupLabel>Model Exchange</GroupLabel>
            </Group>
            <Group $w={107}>
              <Items><Button w={105} icon={<WheelIcon />} label="Publish" caret /></Items>
              <GroupLabel>Technology</GroupLabel>
            </Group>
            <Group $w={688}>
              <Items $pad={10}>
                <Button w={78} icon={<SheetsOut color="#c4703a" />} label={<><u>P</u>ublish</>} caret />
                <Button w={78} icon={<SheetsIn />} label={<><u>I</u>mport</>} caret />
                <Sep $l={2} $r={4} />
                {technologies.map(([name, w], i) => (
                  <React.Fragment key={name}>
                    <Button w={w} icon={<TechIcon />} label={name} caret />
                    <Sep $r={technologies[i + 1] ? technologies[i + 1][2] : 4} />
                  </React.Fragment>
                ))}
                <Button w={77} icon={<TechIcon />} label="NIEM" second="3.0" caret />
              </Items>
              <GroupLabel>Technologies</GroupLabel>
            </Group>
          </Ribbon>

          <Body>
            <Browser>
              <PanelHead $l={3} $r={10}>
                <PanelTitle $size={27} $ls={0.15} $c="#2059b2">Project Browser</PanelTitle>
                <HeadIcons />
              </PanelHead>
              <ModelPicker>
                <BurgerIcon />
                <PickerText>Use Case Model</PickerText>
                <Caret $s={4.5} $c="#666" />
                <PickerArrows>
                  <GreenArrow />
                  <GreenArrow down />
                </PickerArrows>
              </ModelPicker>
              <Tree>
                {tree.map(([level, arrow, icon, label, ls, selected], i) => (
                  <TreeRow key={i} $level={level}>
                    <TreeArrow $closed={arrow === 'closed'}>
                      {arrow === 'open' && <OpenArrow />}
                      {arrow === 'closed' && <ClosedArrow />}
                    </TreeArrow>
                    <TreeIcon>{icon}</TreeIcon>
                    <TreeLabel $ls={ls} $selected={selected}>{label}</TreeLabel>
                  </TreeRow>
                ))}
              </Tree>
            </Browser>
            <Splitter $w={10} />
            <Toolbox>
              <PanelHead $l={6} $r={10}>
                <PanelTitle $size={27} $ls={-0.05} $c="#3d3d3d">Toolbox</PanelTitle>
                <HeadIcons />
              </PanelHead>
              <ToolBody>
                <MoreTools>More tools...</MoreTools>
                <Category $h={31}>
                  <CategoryArrow><OpenArrow s={8} c="#8a8a8a" /></CategoryArrow>Use Case
                </Category>
                <ToolList>
                  {tools.map(([name, icon, ls]) => (
                    <ToolItem key={name} $ls={ls}><ToolIcon>{icon}</ToolIcon>{name}</ToolItem>
                  ))}
                </ToolList>
                {categories.map((name) => (
                  <Category key={name}>
                    <CategoryArrow><ClosedArrow c="#a5a5a5" w={10} h={13} /></CategoryArrow>{name}
                  </Category>
                ))}
              </ToolBody>
            </Toolbox>
            <Splitter $w={9} />
            <Workspace>
              <DocHead>
                <svg width="14" height="14" viewBox="0 0 14 14" fill="none">
                  <path d="M7 0.500 1.500 7 7 13.500M13 0.500 7.500 7 13 13.500" stroke="#111" strokeWidth="2.200" />
                </svg>
                <DocIcon><DiagramIcon /></DocIcon>
                <DocTitle>Use Case Diagram: "Primary Use Cases"</DocTitle>
                <HeadTools>
                  <Caret $s={5.5} $c="#111" />
                  <CrossIcon s={11} c="#111" w={2.8} />
                </HeadTools>
              </DocHead>
              <DocTabs>
                <DocTab $w={122}><Rosette size={24} />Start Page</DocTab>
                <DocTab $w={225} $active>
                  <DiagramIcon />Primary Use Cases
                  <TabClose><CrossIcon /></TabClose>
                </DocTab>
                <TabNav>
                  <svg width="8" height="13" viewBox="0 0 8 13"><path d="M7 1V12L1 6.500Z" fill="#f4f4f4" stroke="#777" strokeWidth="1.200" /></svg>
                  <svg width="8" height="13" viewBox="0 0 8 13"><path d="M1 1V12L7 6.500Z" fill="#f4f4f4" stroke="#777" strokeWidth="1.200" /></svg>
                </TabNav>
              </DocTabs>
              <CanvasRow>
                <Canvas><Diagram /></Canvas>
                <Scrollbar>
                  <ScrollButton>
                    <svg width="14" height="8" viewBox="0 0 14 8"><path d="M0 8 7 0 14 8Z" fill="#666" /></svg>
                  </ScrollButton>
                  <ScrollThumb />
                </Scrollbar>
              </CanvasRow>
            </Workspace>
            <DockEdge>
              <svg width="3" height="34" viewBox="0 0 3 34">
                <path d="M1.500 0V7M1.500 16V24" stroke="#9c6f5e" strokeWidth="1.500" />
                <path d="M1.500 10V12M1.500 30V32" stroke="#777" strokeWidth="1.500" />
              </svg>
            </DockEdge>
          </Body>

          <Marker />
          <Pointer width="20" height="30" viewBox="0 0 20 30">
            <path d="M1.500 1.500V23.500L6.500 19L10 27.500L14 25.500L10.500 17.500H17Z" fill="#fff" stroke="#222" strokeWidth="1.900" strokeLinejoin="round" />
          </Pointer>
          <Shade />
          <Captions>
            <CaptionLine $w={716}>So again from the 'Publish' ribbon </CaptionLine>
            <CaptionLine $w={1014}>choose 'Document" -  'Generate documentation'.</CaptionLine>
          </Captions>
          <Progress><Played /></Progress>
        </Frame>
      </Shadow>
    </Page>
  );
}
